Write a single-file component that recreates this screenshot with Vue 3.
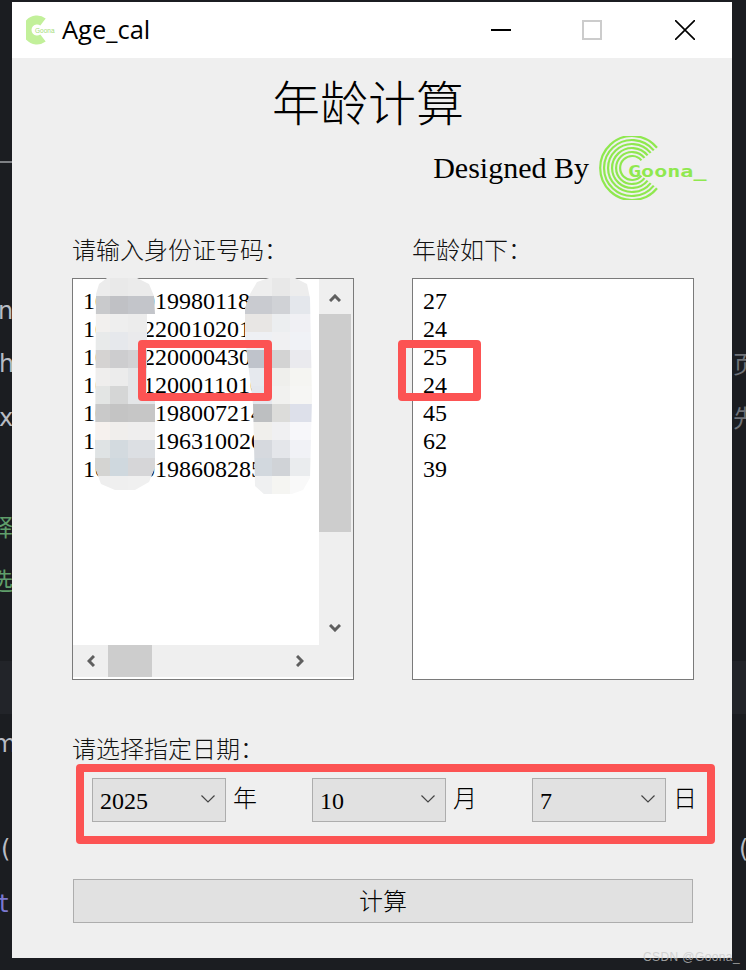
<template>
  <div class="desk">
    <!-- code editor behind the window, only its edges show -->
    <div class="editor-band"></div>
    <div class="editor-rule"></div>
    <span
      v-for="f in editorBits"
      :key="f.text + f.top"
      class="editor-bit"
      :style="{ top: f.top + 'px', left: f.left + 'px', color: f.color }"
    >{{ f.text }}</span>

    <div class="window">
      <div class="titlebar">
        <svg class="app-icon" viewBox="0 0 30 30">
          <path d="M17 7 A10 10 0 1 0 17 23" fill="none" stroke="#c2f09a" stroke-width="9" />
          <text x="9" y="18" class="app-icon-text">Goona</text>
        </svg>
        <span class="app-name">Age_cal</span>
        <div class="win-buttons">
          <svg class="win-btn btn-min" viewBox="0 0 20 20"><path d="M0 10H20" stroke="#000" stroke-width="2" /></svg>
          <svg class="win-btn btn-max" viewBox="0 0 20 20"><rect x="1" y="1" width="18" height="18" fill="none" stroke="#cccccc" stroke-width="2" /></svg>
          <svg class="win-btn btn-close" viewBox="0 0 20 20"><path d="M0 0L20 20M20 0L0 20" stroke="#000" stroke-width="1.6" /></svg>
        </div>
      </div>

      <div class="content">
        <h1 class="title">年龄计算</h1>

        <div class="brand">
          <span class="brand-text">Designed By</span>
          <svg class="brand-logo" viewBox="0 0 110 64">
            <g fill="none" stroke="#8fe84f" stroke-width="2.2">
              <path v-for="r in logoRings" :key="r" :d="ringPath(r)" />
            </g>
            <text transform="translate(30 41) scale(1.45 1)" class="brand-logo-text">Goona_</text>
          </svg>
        </div>

        <div class="columns">
          <div class="column">
            <div class="label">请输入身份证号码：</div>
            <div class="listbox listbox-scroll">
              <div class="list-lines">
                <div v-for="id in idLines" :key="id">{{ id }}</div>
              </div>
              <div class="vbar">
                <svg class="arrow" viewBox="0 0 12 8"><path d="M1 7L6 2L11 7" /></svg>
                <div class="vthumb"></div>
                <svg class="arrow" viewBox="0 0 12 8"><path d="M1 1L6 6L11 1" /></svg>
              </div>
              <div class="hbar">
                <svg class="arrow-h" viewBox="0 0 8 12"><path d="M7 1L2 6L7 11" /></svg>
                <div class="hthumb"></div>
                <svg class="arrow-h arrow-right" viewBox="0 0 8 12"><path d="M1 1L6 6L1 11" /></svg>
              </div>
              <div class="corner"></div>
            </div>
          </div>

          <div class="column">
            <div class="label">年龄如下：</div>
            <div class="listbox">
              <div class="list-lines">
                <div v-for="(age, i) in ages" :key="i">{{ age }}</div>
              </div>
            </div>
          </div>
        </div>

        <div class="label date-label">请选择指定日期：</div>
        <div class="date-row">
          <div v-for="d in dateParts" :key="d.unit" class="date-part">
            <div class="select">
              <span class="select-value">{{ d.value }}</span>
              <svg class="select-arrow" viewBox="0 0 14 8"><path d="M0.5 0.5L7 7L13.5 0.5" /></svg>
            </div>
            <span class="unit">{{ d.unit }}</span>
          </div>
        </div>

        <button class="calc-btn">计算</button>
      </div>
    </div>

    <!-- mosaic that hides the id numbers -->
    <div class="mosaic mosaic-left">
      <i v-for="(c, i) in mosaicLeft" :key="i" :style="{ background: c }"></i>
    </div>
    <div class="mosaic mosaic-right">
      <i v-for="(c, i) in mosaicRight" :key="i" :style="{ background: c }"></i>
    </div>

    <!-- red marks drawn on the screenshot -->
    <div class="mark mark-ids"></div>
    <div class="mark mark-ages"></div>
    <div class="mark mark-date"></div>

    <span class="watermark">CSDN @Goona_</span>
  </div>
</template>

<script setup>
const editorBits = [
  { text: 'n', top: 296, left: -2, color: '#b8bcc4' },
  { text: 'h', top: 349, left: -1, color: '#b8bcc4' },
  { text: 'x', top: 403, left: -1, color: '#b8bcc4' },
  { text: '释', top: 513, left: -11, color: '#5f9e6a' },
  { text: '选', top: 567, left: -11, color: '#5f9e6a' },
  { text: 'm', top: 729, left: -7, color: '#b8bcc4' },
  { text: '(', top: 834, left: 1, color: '#b8bcc4' },
  { text: 't', top: 889, left: -1, color: '#7b78d0' },
  { text: '页', top: 350, left: 733, color: '#6f7278' },
  { text: '先', top: 404, left: 733, color: '#6f7278' },
  { text: '(', top: 834, left: 739, color: '#b8bcc4' }
]

const logoRings = [32, 28, 24, 20, 16, 12]

// arc open to the right, centre at 34,32
const ringPath = (r) => {
  const dx = (r * 0.78).toFixed(1)
  const dy = (r * 0.63).toFixed(1)
  return `M${34 + Number(dx)} ${32 - Number(dy)} A${r} ${r} 0 1 0 ${34 + Number(dx)} ${32 + Number(dy)}`
}

// the hidden digits are placeholders, only the dates can be read
const idLines = [
  '100000199801180000',
  '100002200102010000',
  '100002200004300000',
  '100001200011010000',
  '100000198007214000',
  '100000196310020000',
  '100000198608285000'
]

const ages = [27, 24, 25, 24, 45, 62, 39]

const dateParts = [
  { value: '2025', unit: '年' },
  { value: '10', unit: '月' },
  { value: '7', unit: '日' }
]

const mosaicLeft = [
  '#ececec', '#e9e9e9', '#ebebeb',
  '#c9cacc', '#c0c1c5', '#c3c5ca',
  '#f2f0ee', '#eeeeee', '#ececec',
  '#e8eaea', '#e6e8ec', '#eaeaec',
  '#d5d3d2', '#cdcdcf', '#d2d2d4',
  '#efeeed', '#ececec', '#e4e6e8',
  '#e3e5e4', '#d5d6d6', '#e4e6e8',
  '#c9c9c9', '#c4c4c4', '#c6c6c6',
  '#f6f1ee', '#f0eeec', '#efeeee',
  '#dfe3e4', '#d3dadf', '#dcdfe3',
  '#d4d4d2', '#cfd8de', '#d6d6d8',
  '#eeeeee', '#efefef', '#f0f0f0'
]

const mosaicRight = [
  '#eeeeee', '#e8e8e8', '#ededed',
  '#c9cbd0', '#d0d2d6', '#e4e7ec',
  '#e8e6e4', '#eceef0', '#f0f0f4',
  '#eef0f4', '#f0f0f2', '#f0f2f6',
  '#bfc3cb', '#d3d3d3', '#eaeaee',
  '#e6e9ee', '#efefec', '#f5f5f2',
  '#e4e7ed', '#f1f1ef', '#f6f6f4',
  '#bdbfc1', '#dcdcda', '#dde0ea',
  '#f0efec', '#f0f0f2', '#f7f7fa',
  '#d6d9de', '#e4e6ea', '#f1f2f6',
  '#d2d8de', '#d0d3d7', '#eaecee',
  '#eff0f1', '#f5f5f2', '#f9f9f9'
]
</script>

<style scoped>
.desk {
  position: relative;
  width: 746px;
  height: 970px;
  padding: 2px 14px 12px 12px;
  box-sizing: border-box;
  background: #1b1d21;
  overflow: hidden;
  font-family: "Liberation Serif", "Noto Sans CJK SC", serif;
  color: #000;
}

.editor-band {
  position: absolute;
  left: 0;
  right: 0;
  top: 661px;
  height: 53px;
  background: #222429;
}

.editor-rule {
  position: absolute;
  left: 0;
  top: 161px;
  width: 12px;
  height: 2px;
  background: #7e8084;
}

.editor-bit {
  position: absolute;
  font-family: "DejaVu Sans", "Noto Sans CJK SC", sans-serif;
  font-size: 24px;
  line-height: 30px;
}

.window {
  position: relative;
  width: 720px;
  height: 956px;
  background: #efefef;
}

.titlebar {
  height: 56px;
  background: #fff;
  display: flex;
  align-items: center;
  padding-left: 14px;
}

.app-icon {
  width: 30px;
  height: 30px;
  flex: none;
}

.app-icon-text {
  font-family: "Liberation Sans", sans-serif;
  font-size: 6.5px;
  fill: #a4dc78;
}

.app-name {
  margin: -2px 0 0 6px;
  font-family: "Open Sans", sans-serif;
  font-size: 25.5px;
  color: #000;
}

.win-buttons {
  margin-left: auto;
  display: flex;
  align-items: center;
  padding-right: 37px;
}

.win-btn {
  width: 20px;
  height: 20px;
  flex: none;
}

.btn-max {
  margin-left: 71px;
}

.btn-min {
  margin-top: -1px;
}

.btn-close {
  margin-left: 73px;
}

.content {
  padding: 15px 38px 0 60px;
  font-size: 24px;
}

.title {
  margin: 0 -38px 0 -60px;
  padding-right: 8px;
  font-size: 48px;
  font-weight: 300;
  line-height: 64px;
  text-align: center;
}

.brand {
  display: flex;
  align-items: center;
  justify-content: flex-end;
  height: 64px;
  margin: -1px -14px 0 0;
}

.brand-text {
  font-size: 30px;
  margin-right: 9px;
}

.brand-logo {
  width: 110px;
  height: 64px;
  flex: none;
}

.brand-logo-text {
  font-family: "DejaVu Sans Mono", monospace;
  font-size: 15px;
  font-weight: 700;
  fill: #8fe84f;
}

.columns {
  display: flex;
  gap: 58px;
  margin-top: 36px;
}

.column {
  width: 282px;
}

.label {
  font-size: 24px;
  font-weight: 300;
  line-height: 30px;
  margin-bottom: 12px;
  color: #111;
}

.listbox {
  width: 282px;
  height: 402px;
  box-sizing: border-box;
  border: 1px solid #7a7a7a;
  background: #fff;
}

.listbox-scroll {
  display: grid;
  grid-template-columns: 246px 1fr;
  grid-template-rows: 366px 32px;
  overflow: hidden;
}

.list-lines {
  padding: 8px 0 0 10px;
  line-height: 28px;
  font-size: 24px;
  white-space: nowrap;
  overflow: hidden;
}

.vbar {
  background: #efefef;
  display: flex;
  flex-direction: column;
  width: 100%;
  padding-right: 2px;
  box-sizing: border-box;
  align-items: center;
}

.arrow {
  width: 12px;
  height: 8px;
  flex: none;
  margin: 15px 0 12px;
  fill: none;
  stroke: #5f5f5f;
  stroke-width: 3;
}

.arrow:last-child {
  margin: 6px 0 0;
}

.vthumb {
  width: 100%;
  height: 218px;
  background: #cdcdcd;
  flex: none;
  margin-bottom: 86px;
}

.hbar {
  grid-column: 1 / 2;
  background: #efefef;
  display: flex;
  align-items: center;
  height: 32px;
}

.arrow-h {
  width: 8px;
  height: 12px;
  flex: none;
  margin-left: 14px;
  fill: none;
  stroke: #5f5f5f;
  stroke-width: 3;
}

.hthumb {
  width: 44px;
  height: 32px;
  background: #cdcdcd;
  margin-left: 13px;
  flex: none;
}

.arrow-right {
  margin-left: 144px;
}

.corner {
  background: #efefef;
  height: 32px;
}

.date-label {
  margin: 55px 0 0;
}

.date-row {
  display: flex;
  margin: 13px 0 0 20px;
}

.date-part {
  display: flex;
  align-items: center;
  flex: none;
  width: 220px;
}

.select {
  width: 134px;
  height: 44px;
  box-sizing: border-box;
  border: 1px solid #adadad;
  background: #e1e1e1;
  display: flex;
  align-items: center;
  justify-content: space-between;
  padding: 0 10px 0 7px;
  font-size: 24px;
}

.select-value {
  margin-top: 2px;
}

.select-arrow {
  width: 14px;
  height: 8px;
  fill: none;
  stroke: #444;
  stroke-width: 1.2;
  margin-top: -3px;
}

.unit {
  margin: -7px 0 0 7px;
  font-size: 24px;
  font-weight: 300;
}

.calc-btn {
  display: block;
  width: 620px;
  height: 44px;
  margin: 57px 0 0 1px;
  padding: 0 0 3px;
  box-sizing: border-box;
  border: 1px solid #adadad;
  border-radius: 0;
  background: #e1e1e1;
  font-family: inherit;
  font-size: 24px;
  font-weight: 300;
  color: #000;
}

.mosaic {
  position: absolute;
  top: 278px;
  display: grid;
  grid-auto-rows: 18px;
  overflow: hidden;
}

.mosaic i {
  display: block;
}

.mosaic-left {
  left: 93px;
  width: 62px;
  height: 214px;
  grid-template-columns: 17px 18px 27px;
  clip-path: polygon(14px 0, 44px 0, 56px 6px, 61px 18px, 62px 36px, 54px 36px, 54px 116px, 62px 118px, 62px 190px, 56px 204px, 42px 212px, 22px 212px, 8px 206px, 2px 190px, 3px 16px, 6px 6px);
}

.mosaic-right {
  left: 245px;
  width: 67px;
  height: 218px;
  grid-template-columns: 27px 18px 22px;
  clip-path: polygon(12px 4px, 24px 0, 50px 0, 62px 6px, 65px 20px, 67px 120px, 65px 200px, 58px 212px, 44px 217px, 20px 217px, 10px 208px, 8px 126px, 0 60px, 0 30px, 5px 16px);
}

.mark {
  position: absolute;
  box-sizing: border-box;
  border: 8px solid #fc5353;
  border-radius: 4px;
}

.mark-ids {
  left: 138px;
  top: 340px;
  width: 134px;
  height: 61px;
}

.mark-ages {
  left: 398px;
  top: 340px;
  width: 83px;
  height: 61px;
}

.mark-date {
  left: 76px;
  top: 764px;
  width: 639px;
  height: 80px;
}

.watermark {
  position: absolute;
  left: 643px;
  top: 950px;
  font-family: "Liberation Sans", sans-serif;
  font-size: 12px;
  letter-spacing: 0.4px;
  line-height: 14px;
  color: rgba(200, 200, 200, 0.75);
  white-space: nowrap;
}
</style>
